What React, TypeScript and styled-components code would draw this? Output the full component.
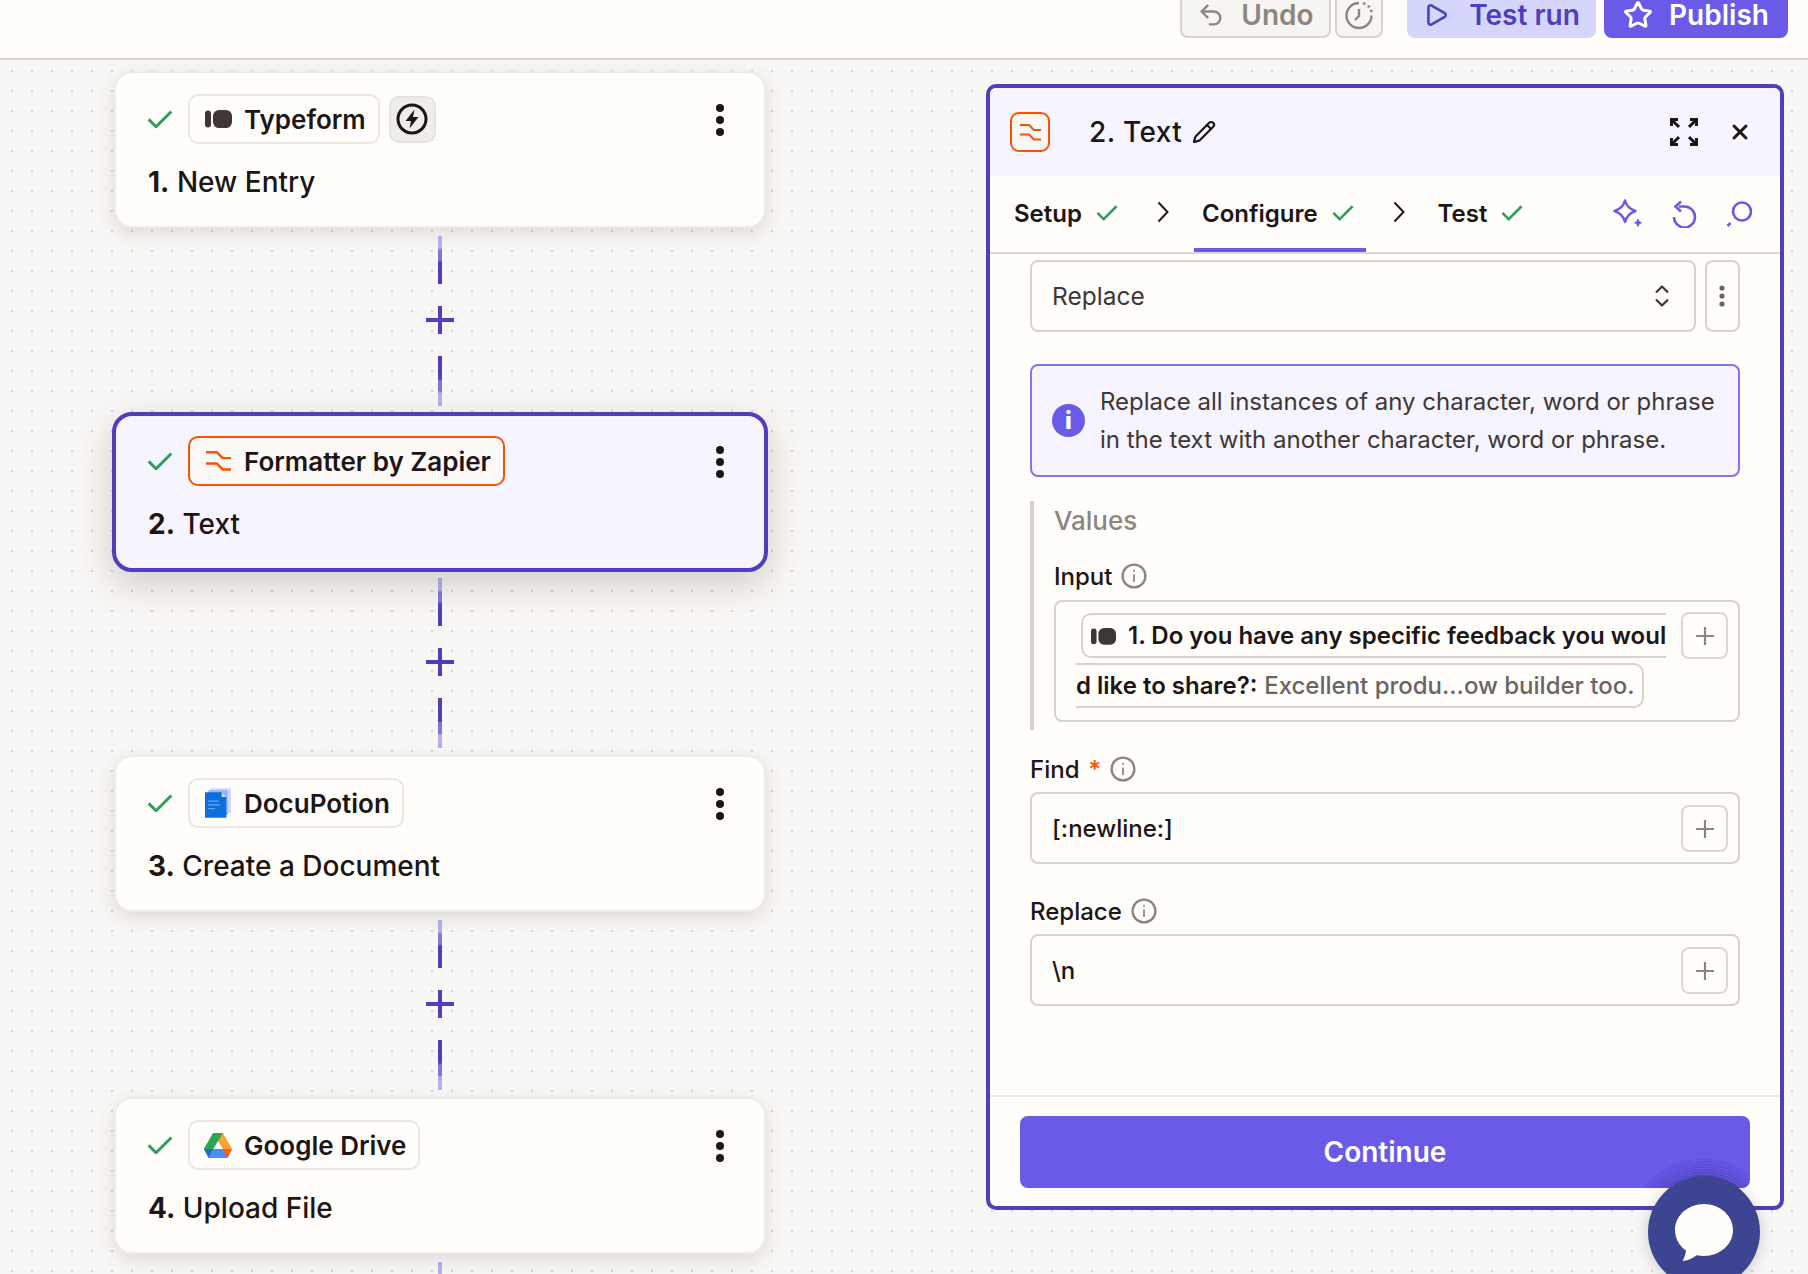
import React from "react";
import styled, { createGlobalStyle } from "styled-components";
import { Pencil, Play, Star, Undo2, X } from "lucide-react";

const GlobalStyle = createGlobalStyle`
  html, body {
    margin: 0;
    padding: 0;
    background: #f9f7f5;
  }

  * {
    box-sizing: border-box;
  }

  body {
    font-family: Inter, "Liberation Sans", sans-serif;
    color: #201515;
  }
`;

const steps = [
  { app: "Typeform", num: "1.", title: "New Entry", icon: "typeform", trigger: true },
  { app: "Formatter by Zapier", num: "2.", title: "Text", icon: "formatter", active: true },
  { app: "DocuPotion", num: "3.", title: "Create a Document", icon: "docu" },
  { app: "Google Drive", num: "4.", title: "Upload File", icon: "drive" },
];

// stippled ring the chat button throws over the Continue button
const haloDots: { x: number; y: number; o: number }[] = [];
for (let r = 58; r <= 75; r += 2.6) {
  const count = Math.round(r * 1.5);
  for (let i = 0; i <= count; i++) {
    const a = Math.PI + (Math.PI * i) / count;
    haloDots.push({
      x: 683 + r * Math.cos(a),
      y: 117 + r * Math.sin(a),
      o: 0.85 - (r - 58) / 30,
    });
  }
}

function Check({ size = 26 }: { size?: number }) {
  return (
    <svg width={size} height={size * 0.72} viewBox="0 0 26 19" fill="none">
      <path d="M1.5 9.5 9 17 24.5 1.5" stroke="#2f9e5b" strokeWidth="3" />
    </svg>
  );
}

function TypeformIcon({ width = 27 }: { width?: number }) {
  return (
    <svg width={width} height={width * 0.67} viewBox="0 0 27 18" fill="#403735">
      <rect x="0" y="0.5" width="6" height="17" rx="3" />
      <rect x="8" y="0" width="19" height="18" rx="6" />
    </svg>
  );
}

function FormatterIcon({ width = 25 }: { width?: number }) {
  return (
    <svg width={width} height={width * 0.81} viewBox="0 0 21 17" fill="none" stroke="#ff4f00" strokeWidth="2">
      <path d="M0 1h9l5 5h7" />
      <path d="M0 10.500h9l5 5h7" />
    </svg>
  );
}

function DocuIcon() {
  return (
    <svg width="26" height="30" viewBox="0 0 28 32">
      <rect x="6" y="0" width="22" height="27" rx="1" fill="#d5d3fb" />
      <rect x="3.5" y="2" width="21" height="27" rx="1" fill="#9ab6f3" />
      <path d="M0 4.5h18l5 5V32H0z" fill="#0b6fdc" />
      <path d="M3 14h12M3 18h13M3 22h8" stroke="#6ea6ee" strokeWidth="1.2" />
      <path d="M18 4.5l5 5h-5z" fill="#cfe0fa" />
    </svg>
  );
}

function DriveIcon() {
  return (
    <svg width="28" height="25" viewBox="0 0 28 25">
      <path d="M9.2 0h9.6L28 16h-9.4z" fill="#ffa133" />
      <path d="M9.2 0 0 16l4.7 8.4 9.3-16.2 4.8-8.2z" fill="#2ea84f" />
      <path d="M0 16h9.2L14 8.2 18.8 0H9.2z" fill="#2ea84f" />
      <path d="M9.4 16H28l-4.6 9H4.6z" fill="#4b8df0" />
      <path d="M0 16h9.4l-4.8 9z" fill="#1470d8" />
      <path d="M18.6 16H28l-4.6 9z" fill="#ff5b14" />
      <path d="M14 8.2 18.6 16H9.4z" fill="#fff" />
    </svg>
  );
}

function BoltIcon() {
  return (
    <svg width="32" height="32" viewBox="0 0 32 32" fill="none">
      <circle cx="16" cy="16" r="14" stroke="#201515" strokeWidth="3" />
      <path d="M18.500 6.500 9.500 18h5.500l-1.500 7.500L22.500 14H17z" fill="#201515" />
    </svg>
  );
}

function Kebab() {
  return (
    <svg width="10" height="34" viewBox="0 0 10 34" fill="#201515">
      <circle cx="5" cy="5" r="4" />
      <circle cx="5" cy="17" r="4" />
      <circle cx="5" cy="29" r="4" />
    </svg>
  );
}

function TimerIcon() {
  return (
    <svg width="28" height="30" viewBox="0 0 28 30" fill="none" stroke="#8b8680" strokeWidth="2.4">
      <path d="M14 3A12.5 12.5 0 1 0 26.5 15.5" />
      <path d="M14 9v7l-4 4" />
      <path d="M19 3.5h.6M23.5 6.5h.6M26 11h.6" strokeLinecap="round" />
    </svg>
  );
}

function ExpandIcon() {
  return (
    <svg width="28" height="28" viewBox="0 0 28 28" fill="none" stroke="#201515" strokeWidth="3">
      <path d="M1.5 8V1.5H8M2 2l7 7" />
      <path d="M20 1.500h6.500V8M26 2l-7 7" />
      <path d="M1.500 20v6.500H8M2 26l7-7" />
      <path d="M20 26.500h6.500V20M26 26l-7-7" />
    </svg>
  );
}

function SparkleIcon() {
  return (
    <svg width="30" height="30" viewBox="0 0 30 30" fill="none" stroke="#695be8" strokeWidth="2.500">
      <path d="M12 1.500c1.500 5.500 4.500 8.700 10.500 10.500C16.500 14 13.500 17 12 23 10.500 17 7.500 14 1.500 12 7.500 10.200 10.500 7 12 1.500z" strokeLinejoin="round" />
      <path d="M25 20c.5 2 1.300 3 3.500 3.800-2.200.7-3 1.700-3.500 3.700-.5-2-1.300-3-3.500-3.700 2.200-.8 3-1.800 3.500-3.800z" fill="#695be8" strokeWidth="1" />
    </svg>
  );
}

function RefreshIcon() {
  return (
    <svg width="25" height="28" viewBox="0 0 25 28" fill="none" stroke="#695be8" strokeWidth="2.600">
      <path d="M7 6.500h5.500a10.500 10.500 0 1 1-10.500 10.500" />
      <path d="M9 1.500 3.500 6.500 9 11.500" />
    </svg>
  );
}

function SearchIcon() {
  return (
    <svg width="26" height="26" viewBox="0 0 26 26" fill="none" stroke="#695be8" strokeWidth="2.600">
      <circle cx="16" cy="10.500" r="9" />
      <path d="M4.500 22 1.500 25" />
    </svg>
  );
}

function InfoOutline() {
  return (
    <svg width="26" height="26" viewBox="0 0 26 26" fill="none" stroke="#8b8680">
      <circle cx="13" cy="13" r="11.400" strokeWidth="2.400" />
      <path d="M13 11.500v7.500M13 7v1.800" strokeWidth="1.800" />
    </svg>
  );
}

function ChatBubble() {
  return (
    <svg width="58" height="57" viewBox="0 0 58 57" fill="#fffefb">
      <path d="M29 0c16 0 29 11.600 29 26S45 52 29 52c-2.500 0-5-.3-7.300-.8C17.500 54.500 12.500 56.500 7.500 57c1.700-2.800 3-6 3.500-10.400C4.300 41.800 0 34.400 0 26 0 11.600 13 0 29 0z" />
    </svg>
  );
}

function ChevronRight() {
  return (
    <svg width="12" height="22" viewBox="0 0 12 22" fill="none" stroke="#201515" strokeWidth="2">
      <path d="M1.500 1.500 10.500 11 1.500 20.500" />
    </svg>
  );
}

function PlusGlyph() {
  return (
    <svg width="20" height="20" viewBox="0 0 20 20" fill="none" stroke="#8b8680" strokeWidth="2.200">
      <path d="M10 1v18M1 10h18" />
    </svg>
  );
}

function AppIcon({ name }: { name: string }) {
  if (name === "typeform") return <TypeformIcon />;
  if (name === "formatter") return <FormatterIcon />;
  if (name === "docu") return <DocuIcon />;
  return <DriveIcon />;
}

function App() {
  return (
    <Page>
      <GlobalStyle />
      <TopBar>
        <UndoButton>
          <Undo2 size={28} strokeWidth={2} color="#8b8680" />
          Undo
        </UndoButton>
        <TimerButton>
          <TimerIcon />
        </TimerButton>
        <TestButton>
          <Play size={26} strokeWidth={2.4} color="#503ebd" />
          Test run
        </TestButton>
        <PublishButton>
          <Star size={30} strokeWidth={2.4} color="#fff" />
          Publish
        </PublishButton>
      </TopBar>

      <Canvas>
        <Flow>
          {steps.map((step, i) => (
            <React.Fragment key={step.app}>
              <Card $active={step.active}>
                <CardTop>
                  <Check />
                  <AppChip $active={step.active}>
                    <ChipIcon>
                      <AppIcon name={step.icon} />
                    </ChipIcon>
                    {step.app}
                  </AppChip>
                  {step.trigger && (
                    <TriggerBadge>
                      <BoltIcon />
                    </TriggerBadge>
                  )}
                  <MenuSlot>
                    <Kebab />
                  </MenuSlot>
                </CardTop>
                <CardTitle>
                  <b>{step.num}</b> {step.title}
                </CardTitle>
              </Card>
              {i < steps.length - 1 ? (
                <Connector>
                  <LineTop />
                  <PlusMark />
                  <LineBottom />
                </Connector>
              ) : (
                <Connector>
                  <LineTop />
                </Connector>
              )}
            </React.Fragment>
          ))}
        </Flow>

        <Panel>
          <PanelHeader>
            <HeaderIcon>
              <FormatterIcon width={21} />
            </HeaderIcon>
            <PanelTitle>2. Text</PanelTitle>
            <Pencil size={24} strokeWidth={2.2} color="#201515" />
            <HeaderActions>
              <ExpandIcon />
              <X size={24} strokeWidth={3} color="#201515" />
            </HeaderActions>
          </PanelHeader>

          <Tabs>
            <Tab>
              Setup <Check size={22} />
            </Tab>
            <TabArrow>
              <ChevronRight />
            </TabArrow>
            <Tab $active>
              Configure <Check size={22} />
            </Tab>
            <TabArrow>
              <ChevronRight />
            </TabArrow>
            <Tab>
              Test <Check size={22} />
            </Tab>
            <TabTools>
              <SparkleIcon />
              <RefreshIcon />
              <SearchIcon />
            </TabTools>
          </Tabs>

          <PanelBody>
            <SelectRow>
              <SelectBox>
                Replace
                <svg width="16" height="24" viewBox="0 0 16 24" fill="none" stroke="#403735" strokeWidth="2.2">
                  <path d="M2 8.500 8 2.500l6 6M2 15.500l6 6 6-6" />
                </svg>
              </SelectBox>
              <DotsButton>
                <svg width="6" height="22" viewBox="0 0 6 22" fill="#6b6560">
                  <circle cx="3" cy="3" r="2.600" />
                  <circle cx="3" cy="11" r="2.600" />
                  <circle cx="3" cy="19" r="2.600" />
                </svg>
              </DotsButton>
            </SelectRow>

            <InfoBox>
              <InfoDot>i</InfoDot>
              <InfoText>
                Replace all instances of any character, word or phrase in the text with another character, word or phrase.
              </InfoText>
            </InfoBox>

            <ValuesGroup>
              <ValuesHeading>Values</ValuesHeading>
              <FieldLabel>
                Input <InfoOutline />
              </FieldLabel>
              <MappedField>
                <MappedText>
                  <Token>
                    <TypeformIcon width={25} />
                    <TokenLabel>1. Do you have any specific feedback you would like to share?:</TokenLabel>{" "}
                    <TokenValue>Excellent produ...ow builder too.</TokenValue>
                  </Token>
                </MappedText>
                <PlusButton $mapped>
                  <PlusGlyph />
                </PlusButton>
              </MappedField>
            </ValuesGroup>

            <OuterLabel $top={24}>
              Find <Required>*</Required> <InfoOutline />
            </OuterLabel>
            <TextField>
              [:newline:]
              <PlusButton>
                <PlusGlyph />
              </PlusButton>
            </TextField>

            <OuterLabel $top={32}>
              Replace <InfoOutline />
            </OuterLabel>
            <TextField>
              \n
              <PlusButton>
                <PlusGlyph />
              </PlusButton>
            </TextField>
          </PanelBody>

          <PanelFooter>
            <ContinueButton>
              <Halo viewBox="0 0 730 72">
                {haloDots.map((d, i) => (
                  <circle key={i} cx={d.x} cy={d.y} r="0.9" fill="#503ebd" opacity={d.o} />
                ))}
              </Halo>
              Continue
            </ContinueButton>
          </PanelFooter>
        </Panel>
      </Canvas>

      <ChatButton>
        <ChatBubble />
      </ChatButton>
    </Page>
  );
}

export default App;

const Page = styled.div`
  position: relative;
  width: 1808px;
  height: 1274px;
  overflow: hidden;
`;

const TopBar = styled.header`
  height: 60px;
  background: #fffefb;
  border-bottom: 2px solid #dcd8d0;
  display: flex;
  justify-content: flex-end;
  align-items: flex-end;
  padding: 0 20px 20px 0;
  overflow: hidden;
`;

const HeaderButton = styled.button`
  height: 46px;
  flex-shrink: 0;
  display: flex;
  align-items: center;
  justify-content: center;
  font-family: inherit;
  font-size: 28px;
  font-weight: 600;
  border-radius: 8px;
`;

const UndoButton = styled(HeaderButton)`
  width: 151px;
  gap: 16px;
  background: #f7f5f2;
  border: 2px solid #d7d3c9;
  color: #8b8680;
`;

const TimerButton = styled(HeaderButton)`
  width: 48px;
  margin-left: 4px;
  padding: 0;
  background: #f7f5f2;
  border: 2px solid #d7d3c9;
`;

const TestButton = styled(HeaderButton)`
  width: 189px;
  margin-left: 24px;
  gap: 20px;
  background: #d5d6fb;
  border: 0;
  color: #503ebd;
`;

const PublishButton = styled(HeaderButton)`
  width: 184px;
  margin-left: 8px;
  gap: 16px;
  background: #695be8;
  border: 0;
  color: #fff;
`;

const Canvas = styled.main`
  height: 1214px;
  display: flex;
  align-items: flex-start;
  padding: 13px 24px 0 116px;
  background-color: #f9f7f5;
  background-image: radial-gradient(circle at 1px 1px, #d9d5cd 1px, transparent 1.300px);
  background-size: 20px 20px;
  background-position: 11px 10px;
`;

const Flow = styled.div`
  width: 648px;
  flex-shrink: 0;
  display: flex;
  flex-direction: column;
  align-items: center;
`;

const Card = styled.section<{ $active?: boolean }>`
  align-self: stretch;
  height: ${(p) => (p.$active ? "160px" : "157px")};
  margin: ${(p) => (p.$active ? "-3px -4px -4px" : "-2px")};
  padding: ${(p) => (p.$active ? "20px 31px 0" : "21px 31px 0")};
  background: ${(p) => (p.$active ? "#f5f4ff" : "#fffefb")};
  border: ${(p) => (p.$active ? "4px solid #503ebd" : "2px solid #eeece7")};
  border-radius: ${(p) => (p.$active ? "20px" : "18px")};
  box-shadow: ${(p) => (p.$active ? "0 12px 36px rgba(60, 50, 40, 0.22)" : "0 6px 18px rgba(60, 50, 40, 0.14)")};
  position: relative;
`;

const CardTop = styled.div`
  height: 50px;
  display: flex;
  align-items: center;
`;

const AppChip = styled.div<{ $active?: boolean }>`
  height: 50px;
  margin-left: 15px;
  padding: 0 12px 0 14px;
  display: flex;
  align-items: center;
  font-size: 26px;
  font-weight: 600;
  background: ${(p) => (p.$active ? "#fdf9f6" : "#fffefb")};
  border: 2px solid ${(p) => (p.$active ? "#ff4f00" : "#e9e7e0")};
  border-radius: 10px;
  white-space: nowrap;
`;

const ChipIcon = styled.span`
  width: 28px;
  margin-right: 12px;
  display: flex;
  align-items: center;
  justify-content: center;
`;

const TriggerBadge = styled.div`
  width: 47px;
  height: 47px;
  margin-left: 9px;
  display: flex;
  align-items: center;
  justify-content: center;
  background: #efede9;
  border: 2px solid #e6e4de;
  border-radius: 10px;
`;

const MenuSlot = styled.div`
  margin: 2px 8px 0 auto;
  display: flex;
`;

const CardTitle = styled.div`
  margin-top: 20px;
  padding-left: 1px;
  font-size: 28px;
  line-height: 36px;
  font-weight: 500;

  b {
    font-weight: 700;
  }
`;

const Connector = styled.div`
  height: 189px;
  padding-top: 10px;
  display: flex;
  flex-direction: column;
  align-items: center;
`;

const LineTop = styled.div`
  width: 4px;
  height: 48px;
  background: linear-gradient(to bottom, #b5aff0 0%, #b5aff0 25%, #8178d6 30%, #8178d6 50%, #503ebd 55%);
`;

const LineBottom = styled.div`
  width: 4px;
  height: 50px;
  background: linear-gradient(to top, #b5aff0 0%, #b5aff0 25%, #8178d6 30%, #8178d6 50%, #503ebd 55%);
`;

const PlusMark = styled.div`
  width: 28px;
  height: 28px;
  margin: 22px 0;
  background:
    linear-gradient(#503ebd, #503ebd) center / 4px 100% no-repeat,
    linear-gradient(#503ebd, #503ebd) center / 100% 4px no-repeat;
`;

const Panel = styled.aside`
  width: 798px;
  height: 1126px;
  margin: 11px 0 0 222px;
  flex-shrink: 0;
  display: flex;
  flex-direction: column;
  background: #fffefb;
  border: 4px solid #503ebd;
  border-radius: 10px;
  overflow: hidden;
`;

const PanelHeader = styled.div`
  height: 88px;
  flex-shrink: 0;
  padding: 0 28px 0 20px;
  display: flex;
  align-items: center;
  background: #f5f4ff;
`;

const HeaderIcon = styled.div`
  width: 40px;
  height: 40px;
  display: flex;
  align-items: center;
  justify-content: center;
  background: #fbf7f4;
  border: 2px solid #ff4f00;
  border-radius: 9px;
`;

const PanelTitle = styled.h2`
  margin: 0 10px 0 39px;
  font-size: 28px;
  font-weight: 500;
  letter-spacing: 0.4px;
`;

const HeaderActions = styled.div`
  margin-left: auto;
  display: flex;
  align-items: center;
  gap: 30px;
`;

const Tabs = styled.nav`
  height: 78px;
  flex-shrink: 0;
  padding: 0 28px 0 16px;
  display: flex;
  align-items: stretch;
  border-bottom: 2px solid #dcd8d0;
`;

const Tab = styled.div<{ $active?: boolean }>`
  padding: 2px 12px 0 8px;
  display: flex;
  align-items: center;
  gap: 14px;
  font-size: 24px;
  font-weight: 600;
  border-bottom: 4px solid ${(p) => (p.$active ? "#695be8" : "transparent")};
`;

const TabArrow = styled.div`
  width: 64px;
  display: flex;
  align-items: center;
  justify-content: center;
  padding: 0 0 4px 2px;
`;

const TabTools = styled.div`
  margin-left: auto;
  display: flex;
  align-items: center;
  gap: 29px;
`;

const PanelBody = styled.div`
  flex: 1;
  padding: 6px 40px 0;
`;

const SelectRow = styled.div`
  display: flex;
  gap: 9px;
`;

const SelectBox = styled.div`
  flex: 1;
  height: 72px;
  padding: 0 24px 0 20px;
  display: flex;
  align-items: center;
  justify-content: space-between;
  font-size: 24.500px;
  color: #403735;
  border: 2px solid #d7d3c9;
  border-radius: 8px;
`;

const DotsButton = styled.div`
  width: 35px;
  height: 72px;
  padding-right: 2px;
  display: flex;
  align-items: center;
  justify-content: center;
  border: 2px solid #d7d3c9;
  border-radius: 8px;
`;

const InfoBox = styled.div`
  height: 113px;
  margin-top: 32px;
  padding: 0 14px 0 20px;
  display: flex;
  align-items: center;
  gap: 15px;
  background: #f5f4ff;
  border: 2px solid #7f76f3;
  border-radius: 8px;
`;

const InfoDot = styled.div`
  width: 33px;
  height: 33px;
  flex-shrink: 0;
  display: flex;
  align-items: center;
  justify-content: center;
  background: #695be8;
  color: #fff;
  font-size: 24px;
  font-weight: 800;
  border-radius: 50%;
`;

const InfoText = styled.p`
  margin: 0;
  font-size: 24px;
  line-height: 38px;
  color: #403735;
`;

const ValuesGroup = styled.div`
  height: 229px;
  margin-top: 24px;
  padding-left: 20px;
  border-left: 4px solid #d7d3c9;
`;

const ValuesHeading = styled.div`
  padding-top: 3px;
  font-size: 26px;
  line-height: 34px;
  font-weight: 500;
  color: #8b8680;
`;

const FieldLabel = styled.div`
  height: 30px;
  margin: 23px 0 9px;
  display: flex;
  align-items: center;
  gap: 9px;
  font-size: 24px;
  font-weight: 500;
`;

const OuterLabel = styled(FieldLabel)<{ $top: number }>`
  margin: ${(p) => p.$top}px 0 8px;
`;

const Required = styled.span`
  color: #ff4f00;
`;

const MappedField = styled.div`
  position: relative;
  height: 122px;
  padding: 9px 0 0 20px;
  border: 2px solid #d7d3c9;
  border-radius: 8px;
`;

const MappedText = styled.div`
  width: 592px;
  text-indent: 5px;
  font-size: 24px;
  line-height: 50px;
  word-break: break-all;
`;

const Token = styled.span`
  padding: 6px 8px;
  border: 2px solid #d7d3c9;
  border-radius: 10px;
  box-decoration-break: slice;

  svg {
    margin-right: 12px;
    vertical-align: -1px;
  }
`;

const TokenLabel = styled.span`
  font-weight: 600;
`;

const TokenValue = styled.span`
  font-weight: 500;
  color: #6b6560;
`;

const PlusButton = styled.div<{ $mapped?: boolean }>`
  position: absolute;
  right: 10px;
  top: ${(p) => (p.$mapped ? "10px" : "11px")};
  width: 47px;
  height: 47px;
  display: flex;
  align-items: center;
  justify-content: center;
  background: #fffefb;
  border: 2px solid #dcd8d0;
  border-radius: 8px;
`;

const TextField = styled.div`
  position: relative;
  height: 72px;
  padding: 0 20px;
  display: flex;
  align-items: center;
  font-size: 24px;
  font-weight: 500;
  border: 2px solid #d7d3c9;
  border-radius: 8px;
`;

const PanelFooter = styled.div`
  height: 111px;
  flex-shrink: 0;
  padding: 19px 30px 0;
  border-top: 2px solid #e9e7e0;
`;

const ContinueButton = styled.button`
  position: relative;
  width: 100%;
  height: 72px;
  display: block;
  overflow: hidden;
  font-family: inherit;
  font-size: 28px;
  font-weight: 600;
  color: #fff;
  background: #695be8;
  border: 0;
  border-radius: 8px;
`;

const Halo = styled.svg`
  position: absolute;
  left: 0;
  top: 0;
  width: 730px;
  height: 72px;
`;

const ChatButton = styled.div`
  position: absolute;
  left: 1648px;
  top: 1176px;
  width: 112px;
  height: 112px;
  display: flex;
  align-items: center;
  justify-content: center;
  background: #3d4592;
  border-radius: 50%;
  box-shadow: 0 2px 16px rgba(0, 0, 0, 0.18);
`;
